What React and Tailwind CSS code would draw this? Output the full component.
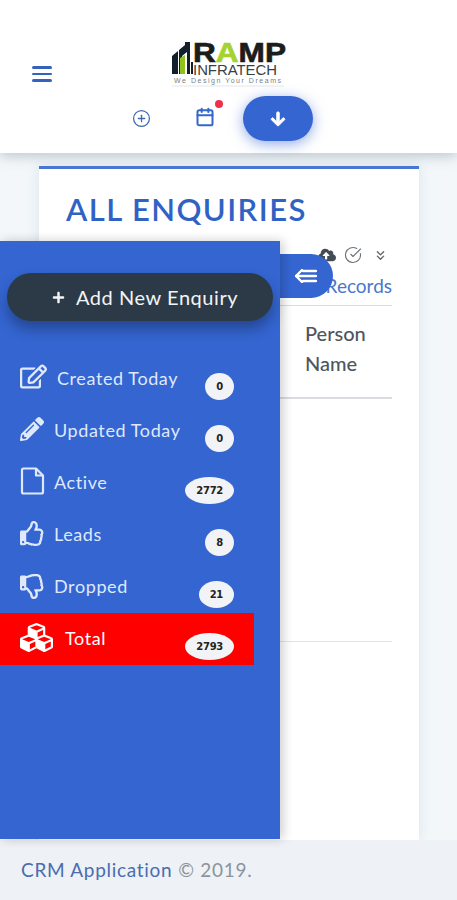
import {
  FaArrowDown,
  FaCloudUploadAlt,
  FaCubes,
  FaPencilAlt,
  FaPlus,
  FaRegEdit,
  FaRegThumbsDown,
  FaRegThumbsUp,
} from "react-icons/fa";
import { Calendar, ChevronsDown, CircleCheckBig, CirclePlus } from "lucide-react";

const FileIcon = ({ className }) => (
  <svg width="25" height="28" viewBox="0 0 25 28" fill="none" stroke="currentColor" strokeWidth="2.2" strokeLinejoin="round" className={className}>
    <path d="M2 3 Q2 1.5 3.5 1.5 H16 L23 8.5 V25 Q23 26.5 21.5 26.5 H3.5 Q2 26.5 2 25 Z" />
    <path d="M16 1.5 V8.5 H23" />
  </svg>
);

const menuItems = [
  { label: "Created Today", count: "0", icon: <FaRegEdit className="mb-[6px] text-[27px]" />, gap: "gap-[10px]" },
  { label: "Updated Today", count: "0", icon: <FaPencilAlt className="mb-[4px] text-[24px]" />, gap: "gap-[10px]" },
  { label: "Active", count: "2772", icon: <FileIcon className="mb-[4px]" />, gap: "gap-[9px]" },
  { label: "Leads", count: "8", icon: <FaRegThumbsUp className="mb-[4px] text-[25px]" />, gap: "gap-[9px]" },
  { label: "Dropped", count: "21", icon: <FaRegThumbsDown className="mb-[2px] text-[25px]" />, gap: "gap-[9px]" },
  { label: "Total", count: "2793", icon: <FaCubes className="mb-[4px] text-[33px]" />, gap: "gap-[12px]", active: true },
];

const Logo = () => (
  <svg width="116" height="48" viewBox="0 0 116 48" className="block overflow-visible">
    <path d="M1 16 L7 11 V34 H1 Z" fill="#12202e" />
    <path d="M8 10 L14 5 L14 2 L19 2 V34 H16 V12 L11 16 V34 H8 Z" fill="#12202e" />
    <path d="M9 18 L14 15 V34 H9 Z" fill="#8dc21f" />
    <path d="M20 22 H22 V34 H20 Z" fill="#12202e" />
    <text x="22" y="22" textLength="93" lengthAdjust="spacingAndGlyphs" fontFamily="'Liberation Sans', sans-serif" fontSize="28" fontWeight="700" fill="#1c1c1c" stroke="#1c1c1c" strokeWidth="0.7">
      R<tspan fill="#a4d22e" stroke="#a4d22e">A</tspan>MP
    </text>
    <text x="22" y="35" textLength="84" lengthAdjust="spacingAndGlyphs" fontFamily="'Liberation Sans', sans-serif" fontSize="14" fill="#3a3f44">
      INFRATECH
    </text>
    <text x="3" y="43" textLength="107" fontFamily="'Liberation Sans', sans-serif" fontSize="7" fill="#777f86">
      We Design Your Dreams
    </text>
    <path d="M1 46 H113" stroke="#e5e7eb" />
  </svg>
);

const SideMenu = () => (
  <aside className="absolute top-[241px] left-0 z-20 h-[598px] w-[280px] bg-[#3465d1] pt-[32px] shadow-[3px_0_10px_rgba(0,0,0,0.2)]">
    <button className="ml-[7px] flex h-[48px] w-[266px] items-center gap-[11px] rounded-full bg-[#2c3a47] pl-[45px] text-[20px] tracking-[0.55px] text-[#f2f4f6] shadow-[0_8px_14px_rgba(0,0,0,0.3)]">
      <FaPlus className="text-[13px]" />
      Add New Enquiry
    </button>
    <ul className="mt-[32px]">
      {menuItems.map(({ label, count, icon, gap, active }) => (
        <li
          key={label}
          className={`flex h-[52px] w-[254px] items-center px-[20px] ${active ? "bg-[#ff0000] text-white" : "text-[#dfe9fb]"}`}
        >
          <div className={`flex items-center ${gap}`}>
            {icon}
            <span className="mb-[2px] text-[18px] tracking-[0.6px]">{label}</span>
          </div>
          <span className="mt-[14px] ml-auto flex h-[27px] items-center justify-center rounded-[50%] bg-[#f1f3f6] px-[11px] font-['DejaVu_Sans',sans-serif] text-[10px] font-bold tracking-[-0.3px] text-[#222]">
            {count}
          </span>
        </li>
      ))}
    </ul>
  </aside>
);

const App = () => {
  return (
    <div className="relative flex h-[900px] flex-col overflow-hidden bg-[#f3f7fa] font-['Lato',sans-serif]">
      <header className="relative z-10 flex h-[153px] shrink-0 flex-col bg-white pt-[40px] shadow-[0_3px_12px_rgba(90,110,120,0.35)]">
        <div className="flex items-center">
          <button className="mt-[20px] ml-[32px] flex w-[20px] flex-col gap-[4px]">
            <span className="h-[2.5px] rounded-full bg-[#3462bd]" />
            <span className="h-[2.5px] rounded-full bg-[#3462bd]" />
            <span className="h-[2.5px] rounded-full bg-[#3462bd]" />
          </button>
          <div className="ml-[119px]">
            <Logo />
          </div>
        </div>
        <div className="mt-[8px] flex items-center pl-[132px]">
          <CirclePlus size={19} strokeWidth={1.6} className="text-[#3f68b5]" />
          <div className="relative -mt-[4px] ml-[44px]">
            <Calendar size={20} strokeWidth={2.4} className="text-[#3567c9]" />
            <span className="absolute -top-[7px] left-[20px] h-[8px] w-[8px] rounded-full bg-[#f0304a]" />
          </div>
          <button className="ml-[28px] flex h-[45px] w-[70px] items-center justify-center rounded-full bg-[#3465d1] text-white shadow-[0_3px_14px_rgba(52,101,209,0.55)]">
            <FaArrowDown className="text-[16px]" stroke="currentColor" strokeWidth="30" />
          </button>
        </div>
      </header>

      <main className="flex min-h-0 flex-1 flex-col pt-[13px] pr-[38px] pl-[39px]">
        <div className="flex-1 border-t-[3px] border-[#4a76d4] bg-white px-[27px] shadow-[0_0_12px_rgba(200,215,225,0.6)]">
          <h1 className="mt-[20px] text-[31px] leading-[40px] font-semibold tracking-[1.45px] whitespace-nowrap text-[#2f62c4]">
            ALL ENQUIRIES
          </h1>
          <div className="mt-[14px] flex h-[63px] flex-col items-end border-b border-[#d9dde1] text-[#5d666e]">
            <div className="flex h-[24px] items-center gap-[8px] pr-[4px]">
              <FaCloudUploadAlt className="text-[18px] text-[#444c53]" />
              <CircleCheckBig size={18} strokeWidth={1.5} className="text-[#6c747b]" />
              <ChevronsDown size={15} strokeWidth={2.2} className="ml-[3px] text-[#5d666e]" />
            </div>
            <span className="mt-[7px] text-[19px] leading-[24px] text-[#4a77c9]">Records</span>
          </div>
          <div className="h-[93px] border-b-2 border-[#d9dde1] pt-[12px] pl-[239px] text-[20px] leading-[30px] font-medium text-[#4d565e]">
            Person
            <br />
            Name
          </div>
          <div className="h-[243px] border-b border-[#e2e5e8]" />
        </div>
      </main>

      <footer className="flex h-[60px] shrink-0 items-center bg-[#eef1f5] pl-[21px] text-[19px] tracking-[0.7px]">
        <span className="text-[#4a6cb0]">CRM Application</span>
        <span className="ml-[6px] text-[#8b949c]">© 2019.</span>
      </footer>

      <button className="absolute top-[254px] left-[262px] z-10 flex h-[44px] w-[71px] items-center justify-end rounded-r-full bg-[#3465d1] pr-[16px]">
        <svg width="22" height="14" viewBox="0 0 22 14" fill="none" stroke="white" strokeWidth="2.4" strokeLinecap="round" strokeLinejoin="round">
          <path d="M7 1 L1 7 L7 13" />
          <path d="M1 7 H21" />
          <path d="M8 2 H21" />
          <path d="M8 12 H21" />
        </svg>
      </button>

      <SideMenu />
    </div>
  );
};

export default App;
